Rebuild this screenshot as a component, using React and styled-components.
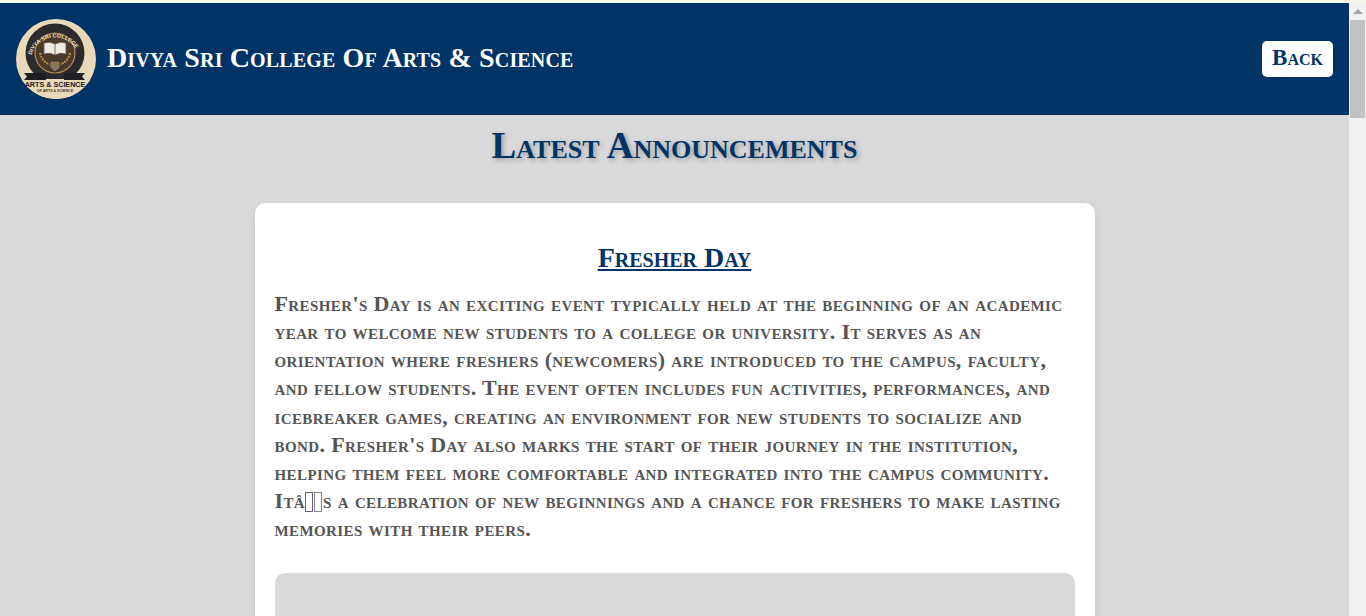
import React from "react";
import styled, { createGlobalStyle } from "styled-components";

const GlobalStyle = createGlobalStyle`
  * {
    box-sizing: border-box;
  }

  html,
  body {
    margin: 0;
    height: 100%;
    overflow: hidden;
  }

  body {
    background: #d9d9d9;
    font-family: "Liberation Serif", "Times New Roman", serif;
    font-variant: small-caps;
  }
`;

const Shell = styled.div`
  height: 100vh;
  display: flex;
  border-top: 3px solid #f6f6ec;
`;

const Page = styled.div`
  flex: 1;
  min-width: 0;
  overflow: hidden;
`;

const ScrollRail = styled.div`
  width: 17px;
  flex: none;
  display: flex;
  flex-direction: column;
  align-items: center;
  background: #f1f1f1;
`;

const ScrollArrow = styled.div`
  height: 17px;
  display: flex;
  align-items: center;
  justify-content: center;

  &::before {
    content: "";
    border-left: 5px solid transparent;
    border-right: 5px solid transparent;
    border-bottom: 5px solid #a3a3a3;
  }
`;

const ScrollThumb = styled.div`
  width: 15px;
  height: 98px;
  background: #c1c1c1;
`;

const Header = styled.header`
  height: 112px;
  background: #003366;
  display: flex;
  align-items: center;
  justify-content: space-between;
  padding: 0 16px;
`;

const Brand = styled.div`
  display: flex;
  align-items: center;
  gap: 11px;
`;

const LogoMark = styled.svg`
  width: 80px;
  height: 80px;
  display: block;
`;

const CollegeName = styled.h1`
  margin: 0 0 3px;
  color: #fff;
  font-size: 28px;
  font-weight: 700;
  letter-spacing: 0.14px;
`;

const BackButton = styled.button`
  width: 71px;
  height: 36px;
  padding: 0 0 3px;
  border: 0;
  border-radius: 5px;
  background: #fff;
  color: #003366;
  font-family: inherit;
  font-variant: inherit;
  font-size: 23px;
  font-weight: 700;
`;

const PageTitle = styled.h2`
  margin: 12px 0 38px;
  color: #003366;
  font-size: 37px;
  line-height: 38px;
  font-weight: 700;
  text-align: center;
  text-shadow: 2px 2px 5px rgba(0, 0, 0, 0.3);
`;

const Card = styled.article`
  width: 840px;
  margin: 0 auto 40px;
  padding: 35px 20px 20px;
  background: #fff;
  border-radius: 10px;
  box-shadow: 0 4px 10px rgba(0, 0, 0, 0.1);
`;

const CardTitle = styled.h3`
  margin: 0 0 12px;
  color: #003366;
  font-size: 28px;
  line-height: 40px;
  font-weight: 700;
  text-align: center;
  text-decoration: underline;
`;

const Body = styled.p`
  margin: 0 0 30px;
  color: #555;
  font-size: 22px;
  line-height: 28.16px;
  font-weight: 700;
  letter-spacing: 0.4px;
`;

const Line = styled.span`
  display: block;
  white-space: nowrap;
`;

const Tofu = styled.span`
  display: inline-block;
  width: 8px;
  height: 20px;
  margin-right: 1px;
  border: 1px solid ${(props) => props.$tone};
  vertical-align: -4px;
`;

const PhotoSlot = styled.div`
  height: 400px;
  border-radius: 10px;
  background: #d9d9d9;
`;

const Logo = () => (
  <LogoMark viewBox="0 0 80 80" aria-label="College crest">
    <defs>
      <clipPath id="crest-disc">
        <circle cx="40" cy="40" r="40" />
      </clipPath>
    </defs>
    <circle cx="40" cy="40" r="40" fill="#e9d9b9" />
    <circle cx="39" cy="34" r="29.5" fill="#2b2a2c" />
    <circle cx="39" cy="34" r="20" fill="#4a3a2b" stroke="#b58f57" strokeWidth="1.2" />
    <path id="crest-arc" d="M15 38a24.5 24.5 0 0 1 48 0" fill="none" />
    <text fontFamily="Liberation Sans, sans-serif" fontSize="5.6" fontWeight="700" fill="#f2e6cd" style={{ fontVariant: "normal" }}>
      <textPath href="#crest-arc" startOffset="3%">DIVYA SRI COLLEGE</textPath>
    </text>
    <path d="M28 24q6-2 11 1q5-3 11-1v11q-6-2-11 1q-5-3-11-1z" fill="#eeeae0" stroke="#5f5a52" strokeWidth="0.8" />
    <path d="M39 25v11" stroke="#5f5a52" strokeWidth="0.8" />
    <path d="M24 34q2 9 11 12M54 34q-2 9-11 12" fill="none" stroke="#c0923f" strokeWidth="2" strokeDasharray="2 1" />
    <path d="M34 42h10v7l-5 4-5-4z" fill="#8a7558" stroke="#2b2a2c" strokeWidth="0.8" />
    <rect y="60" width="80" height="20" fill="#e9d9b9" clipPath="url(#crest-disc)" />
    <path d="M8 54h22v7H8l3-3.5zM48 54h21l-3 3.5 3 3.5H48z" fill="#1f2023" />
    <text x="39" y="67.5" textAnchor="middle" fontFamily="Liberation Sans, sans-serif" fontSize="7.2" fontWeight="700" fill="#20201f" style={{ fontVariant: "normal" }}>ARTS &amp; SCIENCE</text>
    <text x="39" y="72.5" textAnchor="middle" fontFamily="Liberation Sans, sans-serif" fontSize="3.6" fontWeight="700" fill="#3a342b" style={{ fontVariant: "normal" }}>OF ARTS &amp; SCIENCE</text>
  </LogoMark>
);

const App = () => {
  return (
    <>
      <GlobalStyle />
      <Shell>
        <Page>
          <Header>
            <Brand>
              <Logo />
              <CollegeName>Divya Sri College Of Arts &amp; Science</CollegeName>
            </Brand>
            <BackButton>Back</BackButton>
          </Header>
          <main>
            <PageTitle>Latest Announcements</PageTitle>
            <Card>
              <CardTitle>Fresher Day</CardTitle>
              <Body>
                <Line>Fresher's Day is an exciting event typically held at the beginning of an academic</Line>
                <Line>year to welcome new students to a college or university. It serves as an</Line>
                <Line>orientation where freshers (newcomers) are introduced to the campus, faculty,</Line>
                <Line>and fellow students. The event often includes fun activities, performances, and</Line>
                <Line>icebreaker games, creating an environment for new students to socialize and</Line>
                <Line>bond. Fresher's Day also marks the start of their journey in the institution,</Line>
                <Line>helping them feel more comfortable and integrated into the campus community.</Line>
                <Line>Itâ<Tofu $tone="#6f5a86" /><Tofu $tone="#7a8496" />s a celebration of new beginnings and a chance for freshers to make lasting</Line>
                <Line>memories with their peers.</Line>
              </Body>
              <PhotoSlot />
            </Card>
          </main>
        </Page>
        <ScrollRail>
          <ScrollArrow />
          <ScrollThumb />
        </ScrollRail>
      </Shell>
    </>
  );
};

export default App;
